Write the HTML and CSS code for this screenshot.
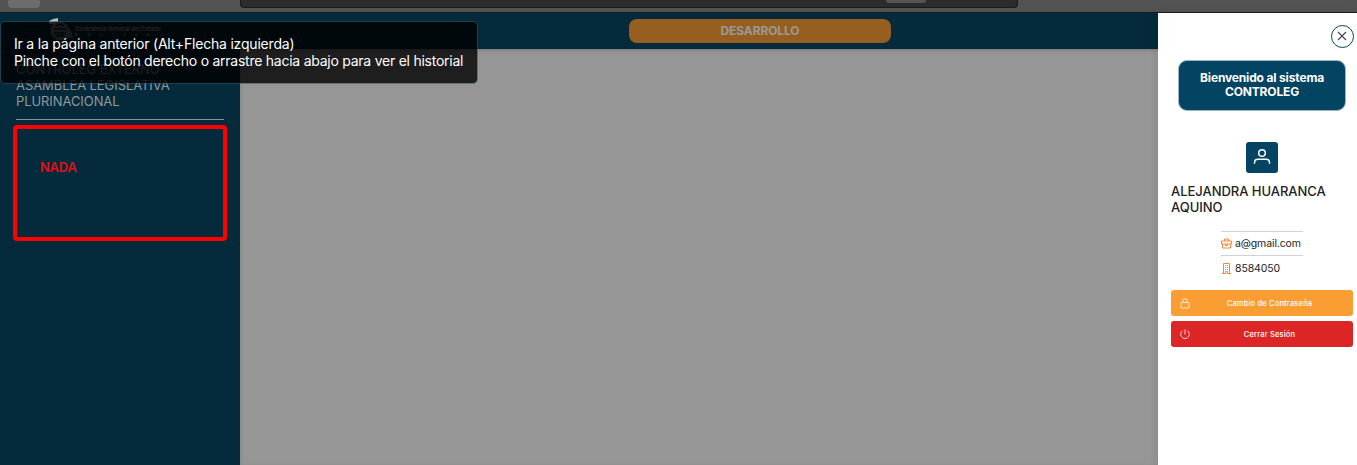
FILE: index.html
```html
<!DOCTYPE html>
<html lang="es">
<head>
<meta charset="utf-8">
<title>CONTROLEG</title>
<link rel="stylesheet" href="styles.css">
</head>
<body>
<div class="browser-bar">
  <div class="nav-button"></div>
  <div class="address-bar"><div class="zoom-chip"></div></div>
</div>
<div class="app">
  <div class="page">
    <header class="topbar">
      <div class="brand">
        <svg class="menu-icon" width="16" height="16" viewBox="0 0 16 16"><path d="M0 2.500h15M0 7.500h15M0 12.500h15"/></svg>
        <svg class="brand-logo" width="26" height="24" viewBox="0 0 26 24">
          <path class="logo-tip" d="M0 3 4 1 9 0v6H0z"/>
          <circle class="logo-disc" cx="11" cy="13" r="9.500"/>
          <path class="logo-disc" d="M17 9l5 3 2 7-8 2z"/>
          <path class="logo-lines" d="M5 11h12M5 15h12M9 15v4M13 15v4M6 18h10M7 8q4-3 8 0"/>
        </svg>
        <div class="brand-name">Contraloría General del Estado<span>B O L I V I A</span></div>
      </div>
      <div class="env-badge">DESARROLLO</div>
    </header>
    <div class="body">
      <aside class="sidebar">
        <div class="org">CONTROLEG EXTERNO<br>ASAMBLEA LEGISLATIVA<br>PLURINACIONAL</div>
        <div class="menu-box">NADA</div>
      </aside>
      <main class="content"></main>
    </div>
  </div>
  <aside class="panel">
    <button class="close" aria-label="Cerrar"><svg width="10" height="10" viewBox="0 0 10 10"><path d="M1 1l8 8M9 1L1 9"/></svg></button>
    <div class="welcome">Bienvenido al sistema<br>CONTROLEG</div>
    <div class="avatar"><svg width="18" height="18" viewBox="0 0 18 18"><circle cx="9" cy="5" r="3.300"/><path d="M1.500 15.700v-1q0-3.500 3.600-3.500h7.800q3.600 0 3.600 3.500v1"/></svg></div>
    <div class="user-name">ALEJANDRA HUARANCA<br>AQUINO</div>
    <div class="details">
      <div class="detail"><svg width="11" height="11" viewBox="0 0 11 11"><path d="M.5 3h10v3H.5zM1.500 6v4h8V6M3.500 3V1h4v2M4.500 6v1.500h2V6"/></svg><span>a@gmail.com</span></div>
      <div class="detail"><svg width="11" height="11" viewBox="0 0 11 11"><path d="M2.500 10.500V.5h6v10M1 10.500h3.700v-2h1.600v2H10"/><path class="windows" d="M4 2.500h3.500M4 4.500h3.500M4 6.500h3.500"/></svg><span class="phone">8584050</span></div>
    </div>
    <button class="action password"><svg width="10" height="11" viewBox="0 0 10 11"><rect x="1" y="4.500" width="8" height="5.500" rx=".8"/><path d="M3 4.500V2.600q0-2 2-2t2 2v1.900"/></svg><span>Cambio de Contraseña</span></button>
    <button class="action logout"><svg width="10" height="11" viewBox="0 0 10 11"><path d="M5 .5v5M2.500 1.700a4.300 4.300 0 1 0 5 0"/></svg><span>Cerrar Sesión</span></button>
  </aside>
</div>
<div class="tooltip"><span class="tooltip-title">Ir a la página anterior (Alt+Flecha izquierda)</span><br>Pinche con el botón derecho o arrastre hacia abajo para ver el historial</div>
</body>
</html>
```
FILE: styles.css
```css
* { box-sizing: border-box; }
body { margin: 0; width: 1357px; height: 465px; overflow: hidden; position: relative; font-family: Inter, sans-serif; background: #969696; }
svg { display: block; fill: none; flex: none; }
button { font-family: inherit; border: 0; padding: 0; }
.browser-bar { height: 13px; background: #535353; border-bottom: 1px solid #1c1c1c; display: flex; align-items: flex-start; padding-left: 8px; }
.nav-button { width: 32px; height: 8px; background: #6c6c6c; border-radius: 0 0 4px 4px; }
.address-bar { width: 778px; height: 8px; margin-left: 200px; background: #2c2c2c; border: 1px solid #1a1a1a; border-top: 0; border-radius: 0 0 4px 4px; padding-left: 645px; }
.zoom-chip { width: 40px; height: 3px; background: #555; border-radius: 0 0 3px 3px; }
.app { display: flex; height: 452px; }
.page { width: 1158px; display: flex; flex-direction: column; }
.topbar { height: 36px; flex: none; background: #042a3b; display: flex; padding-top: 6px; position: relative; box-shadow: 0 1px 4px rgba(0,0,0,.18); }
.brand { width: 629px; display: flex; padding-left: 26px; }
.menu-icon { stroke: #020d12; margin-top: 5px; }
.brand-logo { margin: -1px 0 0 7px; }
.logo-tip { fill: #b5b9bb; }
.logo-disc { fill: #74797b; }
.logo-lines { stroke: #10202a; stroke-width: 1.500; }
.brand-name { font-size: 6px; font-weight: 700; line-height: 7px; color: #a0a0a0; margin-top: 6px; white-space: nowrap; letter-spacing: -.12px; }
.brand-name span { display: block; font-size: 4px; line-height: 5px; word-spacing: 9px; }
.env-badge { width: 262px; height: 24px; background: #965f20; color: #999; border-radius: 8px; font-size: 12px; font-weight: 700; letter-spacing: -.12px; line-height: 24px; text-align: center; }
.body { flex: 1; display: flex; }
.sidebar { width: 240px; background: #042a3b; padding: 12px 13px 0; }
.org { margin: 0 3px; height: 59px; border-bottom: 1px solid #879197; font-size: 13px; letter-spacing: -.08px; line-height: 16px; color: #92999d; white-space: nowrap; }
.menu-box { width: 214px; height: 116px; margin-top: 5px; border: 4px solid #f00; border-radius: 4px; padding: 30px 0 0 23px; font-size: 13px; font-weight: 600; letter-spacing: -.25px; line-height: 16px; color: #e30f18; }
.content { flex: 1; background: #969696; box-shadow: inset 2px 0 3px rgba(0,0,0,.07); }
.panel { width: 199px; background: #fff; padding: 12px 4px 0 13px; display: flex; flex-direction: column; position: relative; box-shadow: -2px 0 8px rgba(0,0,0,.08); }
.close { width: 23px; height: 23px; margin-right: -1px; align-self: flex-end; border: 1px solid #044463; border-radius: 50%; background: #fff; display: grid; place-items: center; }
.close svg { stroke: #44445c; stroke-width: 1.100; margin: -1px 0 0 -1px; }
.welcome { width: 168px; height: 51px; margin: 12px 0 0 7px; padding-top: 10px; background: #044463; border: 1px solid #9db4c2; border-radius: 9px; color: #fff; text-align: center; font-size: 12px; font-weight: 700; letter-spacing: -.16px; line-height: 14px; white-space: nowrap; }
.avatar { width: 32px; height: 31px; margin: 31px 0 0 75px; background: #044463; border-radius: 3px; display: grid; place-items: center; }
.avatar svg { stroke: #fff; stroke-width: 1.500; margin-top: -1px; }
.user-name { margin-top: 10px; color: #222; font-size: 13px; font-weight: 500; letter-spacing: -.04px; line-height: 16px; white-space: nowrap; }
.details { width: 82px; margin: 16px 0 0 50px; }
.detail { height: 24px; border-top: 1px solid #d2d2d2; display: flex; align-items: center; gap: 3px; font-size: 10.500px; letter-spacing: -.12px; color: #222; }
.detail svg { stroke: #f18a3e; stroke-width: 1; }
.detail .windows { stroke-dasharray: 1 1; }
.detail + .detail { height: 25px; }
.action { height: 26px; margin-top: 10px; border-radius: 3px; color: #fff; display: flex; align-items: center; font-size: 7.500px; font-weight: 500; letter-spacing: .18px; }
.action svg { margin-left: 9px; stroke: #fff; stroke-width: .8; }
.action span { flex: 1; padding-right: 4px; text-align: center; }
.password { background: #fa9e33; }
.logout { background: #dc2626; margin-top: 5px; }
.tooltip { position: absolute; left: 0; top: 21px; width: 478px; height: 63px; padding: 13px; background: rgba(0,0,0,.8); background-clip: padding-box; border: 1px solid rgba(50,85,100,.55); border-radius: 5px; color: #fff; font-size: 14px; letter-spacing: -.25px; line-height: 17px; white-space: nowrap; }
.tooltip-title { letter-spacing: -.2px; }
```
